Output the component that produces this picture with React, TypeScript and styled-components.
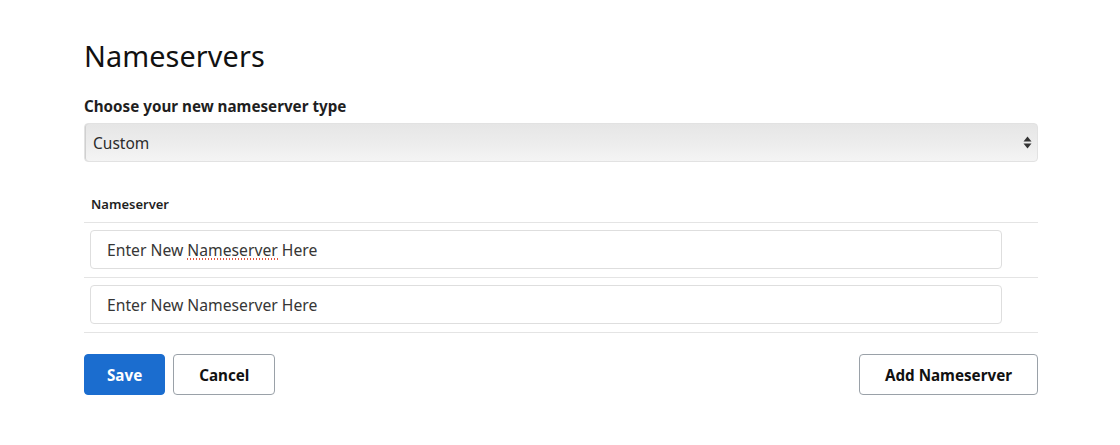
import styled, { createGlobalStyle } from "styled-components";

const GlobalStyle = createGlobalStyle`
  html, body {
    margin: 0;
    padding: 0;
    background: #fff;
  }
  body {
    font-family: "Noto Sans", "Liberation Sans", sans-serif;
    color: #111;
  }
`;

const Page = styled.div`
  padding: 34px 0 0 84px;
  width: 954px;
`;

const Title = styled.h1`
  margin: 0;
  font-size: 28.8px;
  font-weight: 400;
  line-height: 44px;
  letter-spacing: 0.1px;
  color: #111;
`;

const Label = styled.label`
  display: block;
  margin-top: 18px;
  font-size: 15.2px;
  font-weight: 700;
  line-height: 20px;
  color: #1f1f1f;
`;

const SelectWrap = styled.div`
  position: relative;
  margin-top: 7px;
`;

const Select = styled.select`
  appearance: none;
  width: 100%;
  height: 39px;
  padding: 0 30px 0 8px;
  border: 1px solid #e2e2e2;
  border-radius: 4px;
  background: linear-gradient(#e6e6e6, #ececec 50%, #f4f4f4);
  box-shadow: inset 1px 0 0 #d0d0d0;
  font-family: "Noto Sans", "Liberation Sans", sans-serif;
  font-size: 15.5px;
  color: #2b2b2b;
  outline: none;
`;

const Arrows = styled.svg`
  position: absolute;
  right: 6px;
  top: 13px;
  pointer-events: none;
`;

const Table = styled.div`
  margin-top: 33px;
`;

const HeadCell = styled.div`
  padding: 0 7px 9px;
  font-size: 13px;
  font-weight: 600;
  line-height: 18px;
  color: #1f1f1f;
  border-bottom: 1px solid #e4e4e4;
`;

const Row = styled.div`
  padding: 7px 36px 8px 6px;
  border-bottom: 1px solid #e4e4e4;
`;

const Field = styled.div`
  position: relative;
`;

const Input = styled.input`
  box-sizing: border-box;
  width: 100%;
  height: 39px;
  padding: 0 16px;
  border: 1px solid #dedede;
  border-radius: 4px;
  font-family: "Noto Sans", "Liberation Sans", sans-serif;
  font-size: 15.7px;
  color: #333;
  outline: none;

  &::placeholder {
    color: #363636;
    opacity: 1;
  }
`;

const Squiggle = styled.span`
  position: absolute;
  left: 96px;
  top: 28px;
  width: 93px;
  height: 2px;
  background-image: radial-gradient(circle, #e5533d 0.8px, transparent 1px);
  background-size: 3px 2px;
  pointer-events: none;
`;

const Actions = styled.div`
  display: flex;
  align-items: center;
  gap: 8px;
  margin-top: 21px;
`;

const Button = styled.button<{ $primary?: boolean }>`
  box-sizing: border-box;
  height: 41px;
  padding: 0 ${(p) => (p.$primary ? 22 : 25)}px;
  border-radius: 4px;
  border: 1px solid ${(p) => (p.$primary ? "#1b6dcf" : "#9aa1a8")};
  background: ${(p) => (p.$primary ? "#1b6dcf" : "#fff")};
  color: ${(p) => (p.$primary ? "#fff" : "#111")};
  font-family: "Noto Sans", "Liberation Sans", sans-serif;
  font-size: 15.2px;
  font-weight: 700;
  cursor: pointer;
`;

const Spacer = styled.div`
  flex: 1;
`;

export default function App() {
  return (
    <>
      <GlobalStyle />
      <Page>
        <Title>Nameservers</Title>
        <Label htmlFor="ns-type">Choose your new nameserver type</Label>
        <SelectWrap>
          <Select id="ns-type" defaultValue="custom">
            <option value="default">Default</option>
            <option value="custom">Custom</option>
          </Select>
          <Arrows width="9" height="13" viewBox="0 0 9 13">
            <path d="M4.5 0.5 L8.5 5.5 L0.5 5.5 Z" fill="#333" />
            <path d="M4.5 12.5 L8.5 7.5 L0.5 7.5 Z" fill="#333" />
          </Arrows>
        </SelectWrap>
        <Table>
          <HeadCell>Nameserver</HeadCell>
          <Row>
            <Field>
              <Input placeholder="Enter New Nameserver Here" />
              <Squiggle />
            </Field>
          </Row>
          <Row>
            <Field>
              <Input placeholder="Enter New Nameserver Here" />
            </Field>
          </Row>
        </Table>
        <Actions>
          <Button $primary>Save</Button>
          <Button>Cancel</Button>
          <Spacer />
          <Button>Add Nameserver</Button>
        </Actions>
      </Page>
    </>
  );
}
